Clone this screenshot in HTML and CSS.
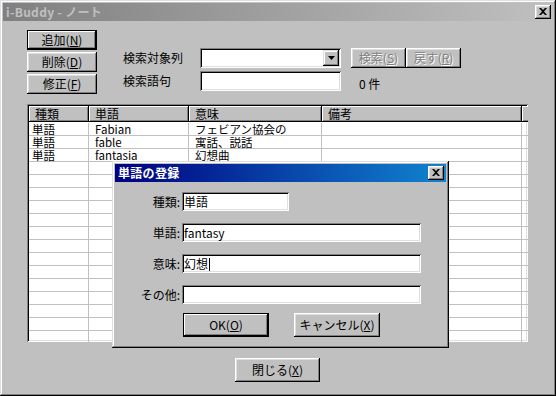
FILE: index.html
```html
<!DOCTYPE html>
<html lang="ja">
<head>
    <meta charset="UTF-8">
    <title>i-Buddy - ノート</title>
    <link rel="stylesheet" href="styles.css">
</head>
<body>
    <div class="window">
        <div class="titlebar inactive">
            <span class="title">i-Buddy - ノート</span>
            <span class="cap-btn">
                <svg width="8" height="7" viewBox="0 0 8 7"><path d="M0 0h2l2 2 2-2h2L5 3.5 8 7H6L4 5 2 7H0l3-3.5z" fill="#000"/></svg>
            </span>
        </div>

        <div class="client">
            <div class="top">
                <div class="btn-col">
                    <button class="btn default">追加(<u>N</u>)</button>
                    <button class="btn">削除(<u>D</u>)</button>
                    <button class="btn">修正(<u>F</u>)</button>
                </div>
                <div class="search">
                    <div class="search-row">
                        <span class="label">検索対象列</span>
                        <div class="field combo">
                            <span class="drop"><svg width="7" height="4" viewBox="0 0 7 4"><path d="M0 0h7L3.5 4z" fill="#000"/></svg></span>
                        </div>
                        <button class="btn small first" disabled>検索(<u>S</u>)</button>
                        <button class="btn small" disabled>戻す(<u>R</u>)</button>
                    </div>
                    <div class="search-row">
                        <span class="label">検索語句</span>
                        <div class="field query"></div>
                        <span class="count">0 件</span>
                    </div>
                </div>
            </div>

            <div class="listview">
                <div class="lv-head">
                    <div class="th">種類</div>
                    <div class="th">単語</div>
                    <div class="th">意味</div>
                    <div class="th">備考</div>
                    <div class="th"></div>
                </div>
                <div class="lv-body" id="rows"></div>
            </div>

            <div class="footer">
                <button class="btn tall close">閉じる(<u>X</u>)</button>
            </div>
        </div>

        <div class="dialog">
            <div class="titlebar active">
                <span class="title">単語の登録</span>
                <span class="cap-btn">
                    <svg width="8" height="7" viewBox="0 0 8 7"><path d="M0 0h2l2 2 2-2h2L5 3.5 8 7H6L4 5 2 7H0l3-3.5z" fill="#000"/></svg>
                </span>
            </div>
            <div class="dlg-body">
                <div class="frow">
                    <span class="flabel">種類:</span>
                    <div class="field entry short">単語</div>
                </div>
                <div class="frow">
                    <span class="flabel">単語:</span>
                    <div class="field entry">fantasy</div>
                </div>
                <div class="frow">
                    <span class="flabel">意味:</span>
                    <div class="field entry">幻想<span class="caret"></span></div>
                </div>
                <div class="frow">
                    <span class="flabel">その他:</span>
                    <div class="field entry"></div>
                </div>
                <div class="dlg-btns">
                    <button class="btn tall default">OK(<u>O</u>)</button>
                    <button class="btn tall">キャンセル(<u>X</u>)</button>
                </div>
            </div>
        </div>
    </div>

    <script>
    const words = [
        ['単語', 'Fabian', 'フェビアン協会の', ''],
        ['単語', 'fable', '寓話、説話', ''],
        ['単語', 'fantasia', '幻想曲', '']
    ];

    const rowsHtml = [];
    for (let i = 0; i < 18; i++) {
        const w = words[i] || ['', '', '', ''];
        rowsHtml.push(`
            <div class="tr">
                <div class="td">${w[0]}</div>
                <div class="td">${w[1]}</div>
                <div class="td">${w[2]}</div>
                <div class="td">${w[3]}</div>
                <div class="td"></div>
            </div>`);
    }
    document.getElementById('rows').innerHTML = rowsHtml.join('');
    </script>
</body>
</html>
```

FILE: styles.css
```css
* {
    box-sizing: border-box;
}

body {
    margin: 0;
    font-family: "Noto Sans CJK JP", "Noto Sans", sans-serif;
    font-size: 12px;
    color: #000;
    background: #c0c0c0;
}

.window {
    position: relative;
    width: 556px;
    height: 396px;
    padding: 3px;
    background: #c0c0c0;
    display: flex;
    flex-direction: column;
    box-shadow: inset -1px -1px #000, inset 1px 1px #dfdfdf,
                inset -2px -2px #808080, inset 2px 2px #fff;
}

/* title bars */
.titlebar {
    height: 18px;
    display: flex;
    align-items: center;
    justify-content: space-between;
    padding: 0 2px 0 3px;
    flex-shrink: 0;
}

.titlebar.inactive {
    background: linear-gradient(to right, #808080, #c0c0c0);
}

.titlebar.active {
    background: linear-gradient(to right, #000080, #1084d0);
}

.title {
    font-weight: bold;
    line-height: 16px;
    letter-spacing: 0.3px;
}

.inactive .title {
    color: #c0c0c0;
}

.active .title {
    color: #fff;
}

.cap-btn {
    width: 16px;
    height: 14px;
    background: #c0c0c0;
    display: flex;
    align-items: center;
    justify-content: center;
    padding-bottom: 1px;
    box-shadow: inset -1px -1px #000, inset 1px 1px #fff,
                inset -2px -2px #808080, inset 2px 2px #dfdfdf;
}

/* buttons */
.btn {
    font-family: inherit;
    font-size: 12px;
    color: #000;
    background: #c0c0c0;
    border: none;
    padding: 0;
    height: 20px;
    width: 70px;
    line-height: 18px;
    box-shadow: inset -1px -1px #000, inset 1px 1px #fff,
                inset -2px -2px #808080, inset 2px 2px #dfdfdf;
}

.btn.default {
    border: 1px solid #000;
    box-shadow: inset -1px -1px #000, inset 1px 1px #fff,
                inset -2px -2px #808080;
}

.btn:disabled {
    color: #808080;
    text-shadow: 1px 1px #fff;
}

.btn.tall {
    height: 24px;
    width: 86px;
}

.btn.small {
    width: 55px;
}

.btn.small.first {
    margin-left: 10px;
}

/* sunken fields */
.field {
    background: #fff;
    height: 20px;
    padding: 2px 3px;
    line-height: 16px;
    white-space: nowrap;
    box-shadow: inset 1px 1px #808080, inset -1px -1px #fff,
                inset 2px 2px #000, inset -2px -2px #dfdfdf;
}

/* main window client */
.client {
    flex: 1;
    padding: 9px 25px 0 24px;
    display: flex;
    flex-direction: column;
}

.top {
    display: flex;
    height: 64px;
}

.btn-col {
    display: flex;
    flex-direction: column;
    gap: 2px;
}

.search {
    margin-left: 26px;
    margin-top: 18px;
    display: flex;
    flex-direction: column;
    gap: 3px;
}

.search-row {
    display: flex;
    align-items: center;
    height: 20px;
}

.label {
    width: 77px;
    padding-bottom: 2px;
}

.combo {
    width: 141px;
    position: relative;
}

.drop {
    position: absolute;
    right: 2px;
    top: 2px;
    width: 16px;
    height: 16px;
    background: #c0c0c0;
    display: flex;
    align-items: center;
    justify-content: center;
    box-shadow: inset -1px -1px #000, inset 1px 1px #dfdfdf,
                inset -2px -2px #808080, inset 2px 2px #fff;
}

.query {
    width: 141px;
}

.count {
    margin-left: 18px;
    padding-top: 4px;
}

/* list view */
.listview {
    margin-top: 10px;
    width: 501px;
    height: 238px;
    padding: 2px;
    background: #fff;
    overflow: hidden;
    box-shadow: inset 1px 1px #808080, inset -1px -1px #fff,
                inset 2px 2px #000, inset -2px -2px #dfdfdf;
}

.lv-head,
.tr {
    display: grid;
    grid-template-columns: 60px 100px 133px 200px 1fr;
}

.th {
    height: 16px;
    background: #c0c0c0;
    padding: 0 6px;
    line-height: 15px;
    box-shadow: inset -1px -1px #000, inset 1px 1px #fff,
                inset -2px -2px #808080;
}

.lv-body {
    padding-top: 1px;
}

.tr {
    height: 13px;
}

.td {
    height: 13px;
    font-size: 11.5px;
    line-height: 12px;
    padding: 0 6px;
    white-space: nowrap;
    border-bottom: 1px solid #c0c0c0;
    border-right: 1px solid #c0c0c0;
}

.td:first-child {
    padding-left: 3px;
}

.td:last-child {
    border-right: none;
}

.footer {
    display: flex;
    justify-content: center;
    margin-top: 16px;
}

.btn.close {
    width: 85px;
}

/* registration dialog, floating over the list */
.dialog {
    position: absolute;
    left: 112px;
    top: 161px;
    width: 337px;
    height: 187px;
    padding: 3px;
    background: #c0c0c0;
    display: flex;
    flex-direction: column;
    box-shadow: inset -1px -1px #000, inset 1px 1px #dfdfdf,
                inset -2px -2px #808080, inset 2px 2px #fff;
}

.dlg-body {
    padding-top: 10px;
    display: flex;
    flex-direction: column;
    gap: 12px;
}

.frow {
    display: flex;
    align-items: center;
}

.flabel {
    width: 65px;
    margin-right: 2px;
    text-align: right;
    padding-bottom: 1px;
}

.entry {
    width: 239px;
    height: 19px;
    padding: 2px 2px;
    line-height: 15px;
}

.entry.short {
    width: 107px;
}

.caret {
    display: inline-block;
    width: 1px;
    height: 13px;
    background: #000;
    vertical-align: -2px;
    margin-left: 1px;
}

.dlg-btns {
    display: flex;
    gap: 25px;
    margin-top: -3px;
    padding-left: 68px;
}
```
